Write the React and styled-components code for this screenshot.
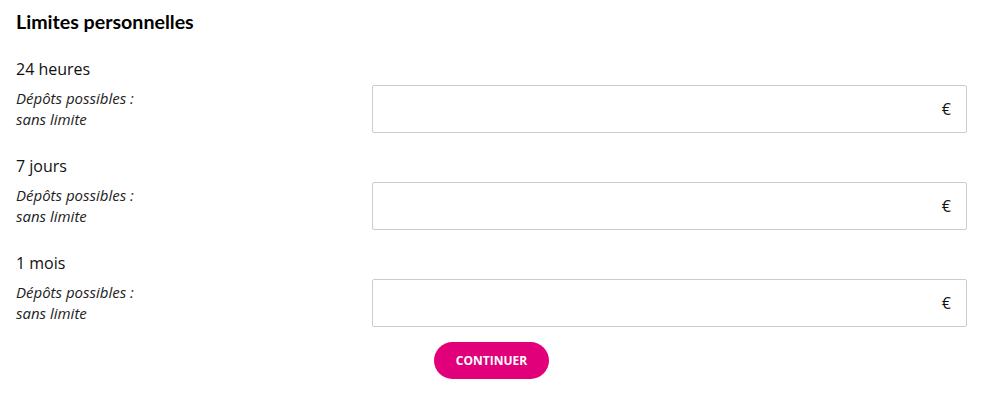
import React from "react";
import styled, { createGlobalStyle } from "styled-components";

const Global = createGlobalStyle`
  html, body { margin: 0; padding: 0; background: #fff; }
  body { font-family: "Open Sans", "Liberation Sans", sans-serif; }
`;

const Page = styled.div`
  padding: 11px 19px 0 16px;
`;

const Title = styled.h2`
  margin: 0 0 25px;
  font-family: Lato, "Open Sans", sans-serif;
  font-weight: 700;
  font-size: 19.6px;
  line-height: 22px;
  color: #000;
`;

const Block = styled.div`
  margin-bottom: ${(p) => (p.$last ? "15px" : "22px")};
`;

const Period = styled.div`
  font-size: 16px;
  line-height: 22px;
  color: #111;
  margin-bottom: 5px;
`;

const Row = styled.div`
  display: grid;
  grid-template-columns: 356px 1fr;
  align-items: center;
`;

const Desc = styled.div`
  font-size: 15px;
  font-style: italic;
  line-height: 21px;
  color: #222;
`;

const Field = styled.label`
  display: flex;
  align-items: center;
  height: 48px;
  box-sizing: border-box;
  border: 1px solid #ccc;
  border-radius: 2px;
  padding: 0 15px 0 12px;
  background: #fff;
`;

const Input = styled.input`
  flex: 1;
  min-width: 0;
  border: 0;
  outline: none;
  font-family: inherit;
  font-size: 16px;
  background: transparent;
`;

const Suffix = styled.span`
  font-size: 16px;
  color: #111;
`;

const Actions = styled.div`
  display: flex;
  justify-content: center;
`;

const Button = styled.button`
  height: 37px;
  padding: 0 22px;
  border: 0;
  border-radius: 19px;
  background: #e2007a;
  color: #fff;
  font-family: "Open Sans", sans-serif;
  font-weight: 700;
  font-size: 12px;
  text-transform: uppercase;
  cursor: pointer;
`;

const limits = ["24 heures", "7 jours", "1 mois"];

export default function App() {
  return (
    <>
      <Global />
      <Page>
        <Title>Limites personnelles</Title>
        {limits.map((l, i) => (
          <Block key={l} $last={i === limits.length - 1}>
            <Period>{l}</Period>
            <Row>
              <Desc>
                Dépôts possibles :<br />sans limite
              </Desc>
              <Field>
                <Input type="text" />
                <Suffix>€</Suffix>
              </Field>
            </Row>
          </Block>
        ))}
        <Actions>
          <Button>Continuer</Button>
        </Actions>
      </Page>
    </>
  );
}
